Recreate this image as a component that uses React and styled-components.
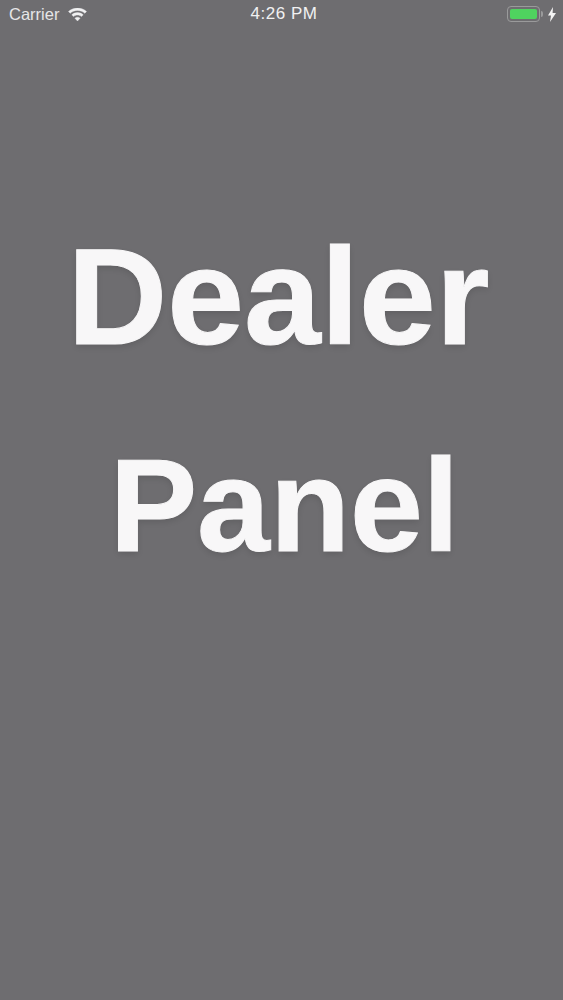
import React from "react";
import styled, { createGlobalStyle } from "styled-components";

const GlobalStyle = createGlobalStyle`
  html, body {
    margin: 0;
    padding: 0;
    background: #6e6d70;
  }
`;

const Screen = styled.div`
  display: flex;
  flex-direction: column;
  width: 563px;
  height: 1000px;
  overflow: hidden;
  background: #6e6d70;
  font-family: "Liberation Sans", Arial, sans-serif;
`;

const StatusBar = styled.div`
  display: grid;
  grid-template-columns: 1fr auto 1fr;
  align-items: center;
  height: 28px;
  padding: 0 7px 0 9px;
  color: #e6e6e7;
`;

const StatusLeft = styled.div`
  display: flex;
  align-items: center;
  gap: 9px;
  font-size: 16.5px;
`;

const WifiSvg = styled.svg`
  margin-top: 2px;
`;

const StatusTime = styled.div`
  padding-left: 3px;
  font-size: 17px;
  letter-spacing: 0.5px;
  color: #f1f1f2;
`;

const StatusRight = styled.div`
  display: flex;
  align-items: center;
  justify-content: flex-end;
  gap: 3px;
`;

const Battery = styled.div`
  position: relative;
  box-sizing: border-box;
  width: 33px;
  height: 16px;
  padding: 2px;
  border: 1px solid #9a9a9b;
  border-radius: 4px;
  margin-right: 5px;

  &::after {
    content: "";
    position: absolute;
    top: 4px;
    right: -4px;
    width: 2px;
    height: 6px;
    border-radius: 0 2px 2px 0;
    background: #9a9a9b;
  }
`;

const BatteryLevel = styled.div`
  height: 100%;
  border-radius: 2px;
  background: #4fd35f;
`;

const Title = styled.main`
  display: flex;
  flex-direction: column;
  align-items: center;
  padding-top: 163px;
`;

const TitleLine = styled.div`
  height: 210px;
  line-height: 210px;
  font-size: ${(p) => p.$size}px;
  font-weight: 700;
  color: #f8f7f8;
  -webkit-text-stroke: 1px #f8f7f8;
  text-shadow: 0 3px 6px rgba(0, 0, 0, 0.12);
  transform: translateX(${(p) => p.$shift}px);
`;

function WifiIcon() {
  return (
    <WifiSvg width="19" height="14" viewBox="0 0 19 14" fill="#f1f1f2" stroke="#f1f1f2" strokeWidth="0.4">
      <path d="M9.5 0C6 0 2.9 1.3.5 3.5l1.7 1.8C4.1 3.5 6.7 2.5 9.5 2.5s5.4 1 7.3 2.8l1.7-1.8C16.1 1.3 13 0 9.500 0z" />
      <path d="M9.5 4.6c-2.2 0-4.2.8-5.7 2.2l1.7 1.8c1.1-1 2.5-1.5 4-1.5s2.9.5 4 1.5l1.7-1.8c-1.5-1.4-3.5-2.2-5.7-2.2z" />
      <path d="M9.5 9.2c-1 0-1.9.4-2.6 1l2.6 2.8 2.6-2.8c-.7-.6-1.6-1-2.6-1z" />
    </WifiSvg>
  );
}

function BoltIcon() {
  return (
    <svg width="8" height="15" viewBox="0 0 8 15" fill="#f4f4f4">
      <path d="M5 0 0 8.500h3L2 15l6-9H4.600z" />
    </svg>
  );
}

export default function App() {
  return (
    <Screen>
      <GlobalStyle />
      <StatusBar>
        <StatusLeft>
          Carrier
          <WifiIcon />
        </StatusLeft>
        <StatusTime>4:26 PM</StatusTime>
        <StatusRight>
          <Battery>
            <BatteryLevel />
          </Battery>
          <BoltIcon />
        </StatusRight>
      </StatusBar>
      <Title>
        <TitleLine $size={138} $shift={-3}>Dealer</TitleLine>
        <TitleLine $size={131} $shift={3}>Panel</TitleLine>
      </Title>
    </Screen>
  );
}
